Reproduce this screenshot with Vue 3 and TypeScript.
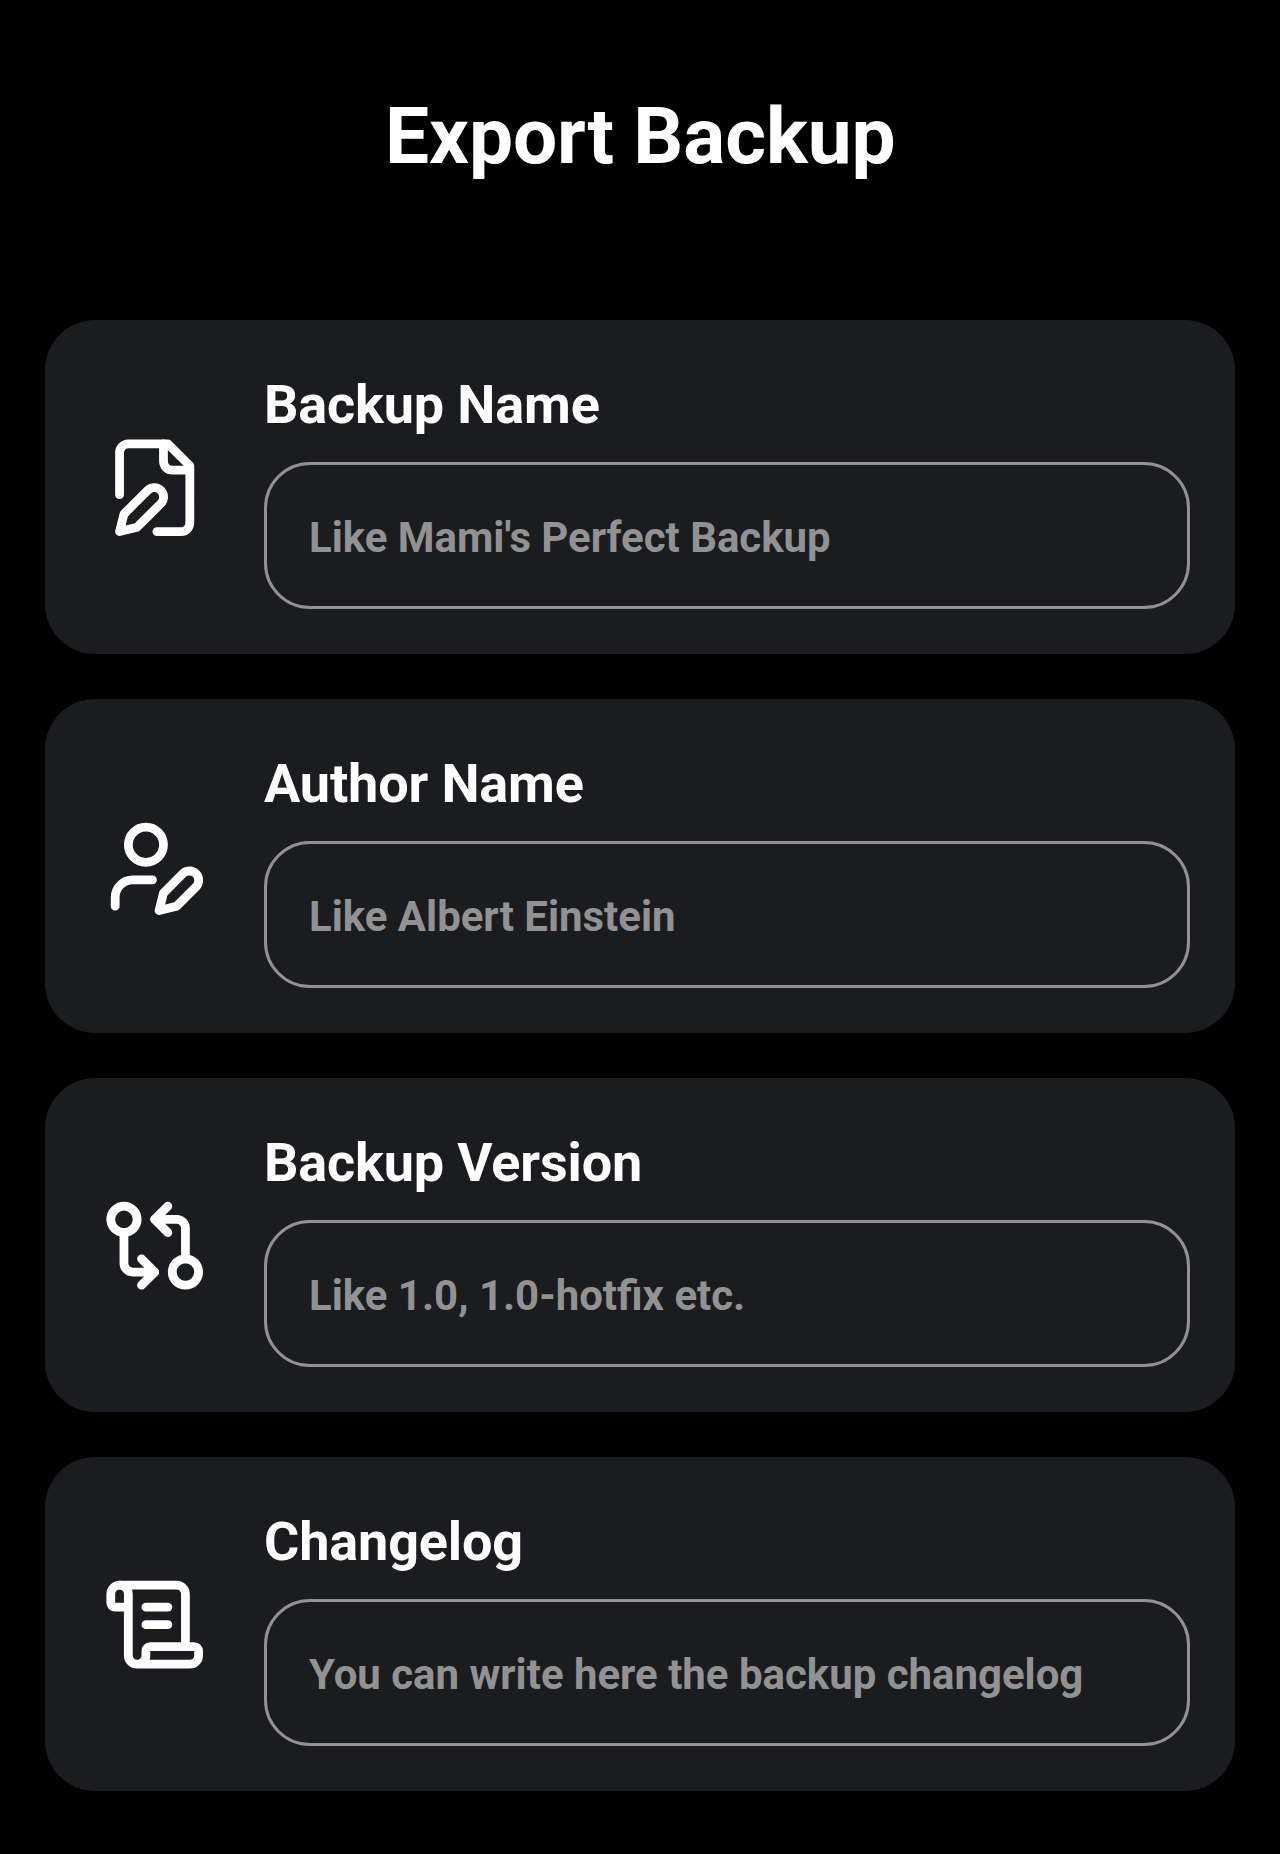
<script setup lang="ts">
import { reactive } from 'vue'

interface Field {
  id: string
  label: string
  placeholder: string
  paths: string[]
  circles: { cx: number; cy: number; r: number }[]
}

const fields: Field[] = [
  {
    id: 'name',
    label: 'Backup Name',
    placeholder: "Like Mami's Perfect Backup",
    paths: [
      'M12.5 22H18a2 2 0 0 0 2-2V7l-5-5H6a2 2 0 0 0-2 2v9.6',
      'M14 2v4a2 2 0 0 0 2 2h4',
      'M10.4 12.6a2 2 0 1 1 3 3L8 21l-4 1 1-4Z',
    ],
    circles: [],
  },
  {
    id: 'author',
    label: 'Author Name',
    placeholder: 'Like Albert Einstein',
    paths: ['M11.5 15H7a4 4 0 0 0-4 4v2', 'M18.4 13.6a2 2 0 0 1 3 3L17 21l-4 1 1-4Z'],
    circles: [{ cx: 10, cy: 7, r: 4 }],
  },
  {
    id: 'version',
    label: 'Backup Version',
    placeholder: 'Like 1.0, 1.0-hotfix etc.',
    paths: [
      'M12 6h5a2 2 0 0 1 2 2v7',
      'm15 9-3-3 3-3',
      'M12 18H7a2 2 0 0 1-2-2V9',
      'm9 15 3 3-3 3',
    ],
    circles: [
      { cx: 5, cy: 6, r: 3 },
      { cx: 19, cy: 18, r: 3 },
    ],
  },
  {
    id: 'changelog',
    label: 'Changelog',
    placeholder: 'You can write here the backup changelog',
    paths: [
      'M15 12h-5',
      'M15 8h-5',
      'M19 17V5a2 2 0 0 0-2-2H4',
      'M8 21h12a2 2 0 0 0 2-2v-1a1 1 0 0 0-1-1H11a1 1 0 0 0-1 1v1a2 2 0 1 1-4 0V5a2 2 0 1 0-4 0v2a1 1 0 0 0 1 1h3',
    ],
    circles: [],
  },
]

const values = reactive<Record<string, string>>({
  name: '',
  author: '',
  version: '',
  changelog: '',
})
</script>

<template>
  <main class="screen">
    <h1 class="title">Export Backup</h1>
    <form class="cards" @submit.prevent>
      <section v-for="field in fields" :key="field.id" class="card">
        <div class="icon-cell">
          <svg class="icon" viewBox="0 0 24 24" aria-hidden="true">
            <path v-for="d in field.paths" :key="d" :d="d" />
            <circle v-for="c in field.circles" :key="c.cx" :cx="c.cx" :cy="c.cy" :r="c.r" />
          </svg>
        </div>
        <div class="body">
          <label class="label" :for="field.id">{{ field.label }}</label>
          <input
            :id="field.id"
            v-model="values[field.id]"
            class="input"
            type="text"
            :placeholder="field.placeholder"
          />
        </div>
      </section>
    </form>
  </main>
</template>

<style>
body {
  margin: 0;
  background: #000;
}
</style>

<style scoped>
.screen {
  box-sizing: border-box;
  min-height: 1854px;
  padding: 90px 45px 63px;
  background: #000;
  color: #fff;
  font-family: Roboto, sans-serif;
}

.title {
  margin: 0 0 138px;
  font-size: 78.4px;
  line-height: 92px;
  font-weight: 700;
  letter-spacing: -0.1px;
  text-indent: 0.6px;
  text-align: center;
}

.cards {
  display: flex;
  flex-direction: column;
  gap: 45px;
}

.card {
  display: flex;
  box-sizing: border-box;
  height: 334px;
  border-radius: 50px;
  background: #1b1c1f;
}

.icon-cell {
  display: flex;
  flex: 0 0 219px;
  align-items: center;
  justify-content: center;
  padding-top: 0.6px;
}

.icon {
  width: 105.4px;
  height: 105.4px;
  fill: none;
  stroke: #fff;
  stroke-width: 2;
  stroke-linecap: round;
  stroke-linejoin: round;
}

.body {
  display: flex;
  flex: 1;
  flex-direction: column;
  gap: 25px;
  min-width: 0;
  padding: 53px 45px 45px 0;
}

.label {
  font-size: 54px;
  line-height: 64px;
  font-weight: 700;
  letter-spacing: -0.15px;
}

.input {
  box-sizing: border-box;
  width: 100%;
  height: 147px;
  padding: 4px 42px 0;
  border: 3px solid #929293;
  border-radius: 46px;
  outline: none;
  background: transparent;
  color: #fff;
  font-family: inherit;
  font-size: 41.95px;
  font-weight: 700;
}

.input::placeholder {
  color: #929292;
  opacity: 1;
}
</style>
